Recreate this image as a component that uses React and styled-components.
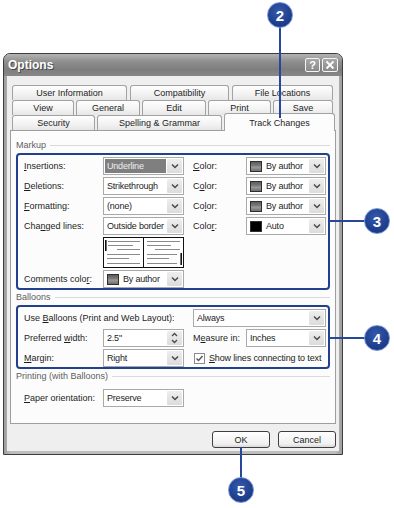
import React from 'react';
import styled, { createGlobalStyle } from 'styled-components';

const GlobalStyle = createGlobalStyle`
  html, body { margin: 0; padding: 0; background: #fff; }
  body { font-family: "Liberation Sans", Arial, sans-serif; }
  u { text-decoration-thickness: 1px; text-underline-offset: 1px; }
`;

const Page = styled.div`
  position: relative;
  width: 394px;
  height: 508px;
  padding: 53px 0 0 3px;
  box-sizing: border-box;
  overflow: hidden;
`;

const Window = styled.div`
  width: 340px;
  box-sizing: border-box;
  border: 1px solid #3d3d3d;
  border-radius: 7px 7px 0 0;
  background: linear-gradient(90deg, #9d9d9d, #bdbdbd 2%, #bdbdbd 98%, #9d9d9d);
  font-size: 9px;
  color: #1c1c1c;
`;

const TitleBar = styled.div`
  height: 22px;
  display: flex;
  align-items: center;
  justify-content: space-between;
  padding: 0 4px;
  border-radius: 6px 6px 0 0;
  background: linear-gradient(#b4b4b4, #8e8e8e 35%, #7e7e7e 70%, #888 100%);
`;

const Title = styled.span`
  font-size: 12px;
  font-weight: bold;
  color: #fff;
  text-shadow: 1px 1px 0 #4a4a4a;
`;

const TitleButtons = styled.div`
  display: flex;
  gap: 2px;
`;

const TitleButton = styled.div`
  width: ${p => p.$w}px;
  height: 14px;
  box-sizing: border-box;
  border: 1px solid #f4f4f4;
  border-radius: 2px;
  background: linear-gradient(#a8a8a8, #8a8a8a);
  color: #fff;
  font-size: 11px;
  font-weight: bold;
  display: flex;
  align-items: center;
  justify-content: center;
`;

const Body = styled.div`
  margin: 0 3px 3px;
  background: #efefef;
  padding: 7px 3px 3px;
`;

const TabRow = styled.div`
  display: flex;
  gap: ${p => p.$gap}px;
  margin-left: 2px;
  height: ${p => p.$h}px;
  position: relative;
`;

const Tab = styled.div`
  width: ${p => p.$w}px;
  box-sizing: border-box;
  border: 1px solid #a2a2a2;
  border-bottom: none;
  border-radius: 3px 3px 0 0;
  background: ${p => (p.$active ? '#fcfcfc' : 'linear-gradient(#fefefe, #f2f2f2 60%, #e6e6e6)')};
  height: ${p => (p.$active ? 18 : 15)}px;
  display: flex;
  align-items: center;
  justify-content: center;
  position: relative;
  z-index: ${p => (p.$active ? 2 : 1)};
  margin-top: ${p => (p.$active ? 0 : 2)}px;
  color: #1c1c1c;
`;

const Panel = styled.div`
  height: 294px;
  box-sizing: border-box;
  border: 1px solid #9e9e9e;
  background: #fcfcfc;
  padding: 8px 5px 0;
`;

const SectionHead = styled.div`
  display: flex;
  align-items: center;
  height: 12px;
  gap: 4px;
  margin-top: ${p => p.$mt || 0}px;
  color: #5e5e5e;
  &::after {
    content: '';
    flex: 1;
    height: 1px;
    background: #dadada;
  }
`;

const Group = styled.div`
  margin-top: ${p => p.$mt}px;
  border: 2px solid ${p => (p.$highlight ? '#23408e' : 'transparent')};
  border-radius: 4px;
  padding: 2px 2px 0 6px;
  display: grid;
  grid-template-columns: 79px 81px 62px 80px;
  grid-template-rows: ${p => p.$rows || 'none'};
  grid-auto-rows: 18px;
  row-gap: 2px;
  align-items: center;
`;

const Label = styled.div`
  padding-left: ${p => p.$pl || 0}px;
  grid-column: ${p => p.$span || 'auto'};
  white-space: nowrap;
`;

const SelectBox = styled.div`
  height: 18px;
  box-sizing: border-box;
  border: 1px solid #a9a9a9;
  background: #fff;
  display: flex;
  align-items: center;
  padding: 1px;
  grid-column: ${p => p.$span || 'auto'};
  margin-left: ${p => p.$ml || 0}px;
`;

const SelectText = styled.div`
  flex: 1;
  min-width: 0;
  height: 100%;
  display: flex;
  align-items: center;
  gap: 4px;
  padding-left: 2px;
  margin-right: 1px;
  white-space: nowrap;
  letter-spacing: -0.2px;
  overflow: hidden;
  background: ${p => (p.$active ? '#7f7f7f' : 'transparent')};
  color: ${p => (p.$active ? '#f0f0f0' : '#1c1c1c')};
`;

const ArrowButton = styled.div`
  width: 15px;
  flex: none;
  height: 100%;
  display: flex;
  flex-direction: column;
  align-items: center;
  justify-content: center;
  background: linear-gradient(#eeeeee, #dcdcdc);
  border-radius: 1px;
`;

const SpinHalf = styled.div`
  flex: 1;
  width: 100%;
  display: flex;
  align-items: center;
  justify-content: center;
`;

const Swatch = styled.div`
  width: 12px;
  height: 11px;
  flex: none;
  box-sizing: border-box;
  border: 1px solid #2e2e2e;
  background: ${p => p.$color || 'linear-gradient(#5c5c5c, #7e7e7e 45%, #9c9c9c 55%, #6f6f6f)'};
`;

const PreviewCell = styled.div`
  grid-column: 2;
  height: 31px;
`;

const CheckRow = styled.label`
  grid-column: 3 / 5;
  display: flex;
  align-items: center;
  gap: 4px;
  padding-left: 10px;
  white-space: nowrap;
  letter-spacing: -0.15px;
`;

const CheckBox = styled.div`
  width: 11px;
  height: 11px;
  flex: none;
  box-sizing: border-box;
  border: 1px solid #8c8c8c;
  background: #fff;
  display: flex;
  align-items: center;
  justify-content: center;
`;

const Footer = styled.div`
  display: flex;
  justify-content: flex-end;
  gap: 8px;
  margin-top: 7px;
`;

const Button = styled.button`
  width: 58px;
  height: 17px;
  padding: 0;
  font: inherit;
  color: #1c1c1c;
  border: 1px solid #3e3e3e;
  border-radius: 3px;
  background: linear-gradient(#ffffff, #f0f0f0 80%, #d8d8d8);
`;

const Callout = styled.div`
  position: absolute;
  left: ${p => p.$x}px;
  top: ${p => p.$y}px;
  width: 26px;
  height: 26px;
  box-sizing: border-box;
  border-radius: 50%;
  border: 1.5px solid #7392d2;
  background: radial-gradient(circle at 45% 35%, #3559ad, #1c3b88 70%);
  color: #fff;
  font: bold 15px "Liberation Sans", Arial, sans-serif;
  display: flex;
  align-items: center;
  justify-content: center;
  z-index: 5;
`;

const Leader = styled.div`
  position: absolute;
  left: ${p => p.$x}px;
  top: ${p => p.$y}px;
  width: ${p => p.$w}px;
  height: ${p => p.$h}px;
  background: #26479a;
  z-index: 4;
`;

const Chevron = () => (
  <svg width="8" height="6" viewBox="0 0 8 6">
    <path d="M1 1.5 L4 4.5 L7 1.5" fill="none" stroke="#4a4a4a" strokeWidth="1.5" />
  </svg>
);

const Select = ({ children, active, swatch, span, ml }) => (
  <SelectBox $span={span} $ml={ml}>
    <SelectText $active={active}>
      {swatch && <Swatch $color={swatch === 'auto' ? '#000' : null} />}
      {children}
    </SelectText>
    <ArrowButton>
      <Chevron />
    </ArrowButton>
  </SelectBox>
);

const Spin = ({ children }) => (
  <SelectBox>
    <SelectText>{children}</SelectText>
    <ArrowButton>
      <SpinHalf>
        <svg width="7" height="5" viewBox="0 0 7 5">
          <path d="M1 4 L3.5 1.5 L6 4" fill="none" stroke="#4a4a4a" strokeWidth="1.3" />
        </svg>
      </SpinHalf>
      <SpinHalf>
        <svg width="7" height="5" viewBox="0 0 7 5">
          <path d="M1 1 L3.5 3.5 L6 1" fill="none" stroke="#4a4a4a" strokeWidth="1.3" />
        </svg>
      </SpinHalf>
    </ArrowButton>
  </SelectBox>
);

const Preview = () => (
  <PreviewCell>
    <svg width="81" height="31" viewBox="0 0 81 31">
      <rect x="0.5" y="0.5" width="40" height="30" fill="#fff" stroke="#111" />
      <rect x="40.5" y="0.5" width="40" height="30" fill="#fff" stroke="#111" />
      <g stroke="#8a8a8a" strokeWidth="1">
        <line x1="5" y1="4.5" x2="37" y2="4.5" />
        <line x1="5" y1="8.5" x2="30" y2="8.5" />
        <line x1="14" y1="12.5" x2="37" y2="12.5" />
        <line x1="4" y1="17.5" x2="37" y2="17.5" />
        <line x1="4" y1="21.5" x2="26" y2="21.5" />
        <line x1="4" y1="26.5" x2="37" y2="26.5" />
        <line x1="44" y1="4.5" x2="77" y2="4.5" />
        <line x1="44" y1="8.5" x2="68" y2="8.5" />
        <line x1="52" y1="12.5" x2="77" y2="12.5" />
        <line x1="44" y1="17.5" x2="74" y2="17.5" />
        <line x1="44" y1="21.5" x2="66" y2="21.5" />
        <line x1="44" y1="26.5" x2="74" y2="26.5" />
      </g>
      <rect x="2" y="3" width="1.6" height="11" fill="#111" />
      <rect x="77.4" y="16" width="1.6" height="12" fill="#111" />
    </svg>
  </PreviewCell>
);

const colorRows = [
  { label: <><u>I</u>nsertions:</>, value: 'Underline', active: true, color: <><u>C</u>olor:</> },
  { label: <><u>D</u>eletions:</>, value: 'Strikethrough', color: <>C<u>o</u>lor:</> },
  { label: <><u>F</u>ormatting:</>, value: '(none)', color: <>Co<u>l</u>or:</> },
  { label: <>Cha<u>n</u>ged lines:</>, value: 'Outside border', color: <>Colo<u>r</u>:</>, auto: true },
];

export default function App() {
  return (
    <Page>
      <GlobalStyle />
      <Window>
        <TitleBar>
          <Title>Options</Title>
          <TitleButtons>
            <TitleButton $w={15}>?</TitleButton>
            <TitleButton $w={16}>
              <svg width="10" height="10" viewBox="0 0 10 10">
                <path d="M1.5 1.5 L8.5 8.5 M8.5 1.5 L1.5 8.5" stroke="#fff" strokeWidth="1.8" />
              </svg>
            </TitleButton>
          </TitleButtons>
        </TitleBar>
        <Body>
          <TabRow $gap={3} $h={15}>
            <Tab $w={115}>User Information</Tab>
            <Tab $w={99}>Compatibility</Tab>
            <Tab $w={101}>File Locations</Tab>
          </TabRow>
          <TabRow $gap={2} $h={15}>
            <Tab $w={62}>View</Tab>
            <Tab $w={64}>General</Tab>
            <Tab $w={64}>Edit</Tab>
            <Tab $w={63}>Print</Tab>
            <Tab $w={60}>Save</Tab>
          </TabRow>
          <TabRow $gap={2} $h={17}>
            <Tab $w={83}>Security</Tab>
            <Tab $w={125}>Spelling &amp; Grammar</Tab>
            <Tab $w={111} $active>Track Changes</Tab>
          </TabRow>
          <Panel>
            <SectionHead>Markup</SectionHead>
            <Group $highlight $mt={2} $rows="repeat(4, 18px) 31px 18px">
              {colorRows.map((r, i) => (
                <React.Fragment key={i}>
                  <Label>{r.label}</Label>
                  <Select active={r.active}>{r.value}</Select>
                  <Label $pl={9}>{r.color}</Label>
                  <Select swatch={r.auto ? 'auto' : 'author'}>{r.auto ? 'Auto' : 'By author'}</Select>
                </React.Fragment>
              ))}
              <Preview />
              <Label $span="1">Comments colo<u>r</u>:</Label>
              <Select swatch="author">By author</Select>
            </Group>
            <SectionHead $mt={1}>Balloons</SectionHead>
            <Group $highlight $mt={2}>
              <Label $span="1 / 3">Use <u>B</u>alloons (Print and Web Layout):</Label>
              <Select span="3 / 5" ml={9}>Always</Select>
              <Label>Preferred <u>w</u>idth:</Label>
              <Spin>2.5"</Spin>
              <Label $pl={9}>M<u>e</u>asure in:</Label>
              <Select>Inches</Select>
              <Label><u>M</u>argin:</Label>
              <Select>Right</Select>
              <CheckRow>
                <CheckBox>
                  <svg width="9" height="9" viewBox="0 0 9 9">
                    <path d="M1.5 4.5 L3.5 6.5 L7.5 2" fill="none" stroke="#555" strokeWidth="1.4" />
                  </svg>
                </CheckBox>
                <span><u>S</u>how lines connecting to text</span>
              </CheckRow>
            </Group>
            <SectionHead $mt={1}>Printing (with Balloons)</SectionHead>
            <Group $mt={3}>
              <Label><u>P</u>aper orientation:</Label>
              <Select>Preserve</Select>
            </Group>
          </Panel>
          <Footer>
            <Button>OK</Button>
            <Button>Cancel</Button>
          </Footer>
        </Body>
      </Window>

      <Leader $x={279} $y={26} $w={2} $h={92} />
      <Callout $x={267} $y={2}>2</Callout>
      <Leader $x={330} $y={220} $w={36} $h={2} />
      <Callout $x={364} $y={208}>3</Callout>
      <Leader $x={330} $y={337} $w={36} $h={2} />
      <Callout $x={364} $y={325}>4</Callout>
      <Leader $x={240} $y={447} $w={2} $h={32} />
      <Callout $x={228} $y={477}>5</Callout>
    </Page>
  );
}
